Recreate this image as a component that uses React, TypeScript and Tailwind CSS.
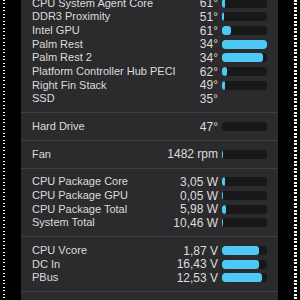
type Row = { label: string; value: string; fill: number | null };

const groups: Row[][] = [
  [
    { label: "CPU System Agent Core", value: "61°", fill: 3 },
    { label: "DDR3 Proximity", value: "51°", fill: 2 },
    { label: "Intel GPU", value: "61°", fill: 9 },
    { label: "Palm Rest", value: "34°", fill: 45 },
    { label: "Palm Rest 2", value: "34°", fill: 41 },
    { label: "Platform Controller Hub PECI", value: "62°", fill: 5 },
    { label: "Right Fin Stack", value: "49°", fill: 3 },
    { label: "SSD", value: "35°", fill: null },
  ],
  [{ label: "Hard Drive", value: "47°", fill: 0 }],
  [{ label: "Fan", value: "1482 rpm", fill: 1 }],
  [
    { label: "CPU Package Core", value: "3,05 W", fill: 3 },
    { label: "CPU Package GPU", value: "0,05 W", fill: 1 },
    { label: "CPU Package Total", value: "5,98 W", fill: 4 },
    { label: "System Total", value: "10,46 W", fill: 1 },
  ],
  [
    { label: "CPU Vcore", value: "1,87 V", fill: 37 },
    { label: "DC In", value: "16,43 V", fill: 37 },
    { label: "PBus", value: "12,53 V", fill: 40 },
  ],
  [{ label: "", value: "", fill: 3 }],
];

const Bar = ({ fill }: { fill: number | null }) => {
  if (fill === null) return <div className="w-[45px] h-[9px] ml-[4px]" />;
  return (
    <div className="w-[45px] h-[9px] ml-[4px] rounded-[3px] bg-[#18181a] overflow-hidden flex">
      {fill > 0 && (
        <div className="h-full rounded-[3px] bg-[#4ec8f7]" style={{ width: fill }} />
      )}
    </div>
  );
};

const Edge = ({ dense }: { dense?: boolean }) => (
  <div
    className={
      dense
        ? "w-[3px] h-full bg-[repeating-linear-gradient(180deg,#ffffff_0px,#ffffff_2px,#000000_2px,#000000_3px,#ffffff_3px,#ffffff_5px,#000000_5px,#000000_7px)]"
        : "w-[2px] h-full bg-[repeating-linear-gradient(180deg,#ffffff_0px,#ffffff_1px,#000000_1px,#000000_3px,#ffffff_3px,#ffffff_4px,#000000_4px,#000000_7px)]"
    }
  />
);

const App = () => {
  return (
    <div
      className="w-[300px] h-[300px] bg-black overflow-hidden flex"
      style={{ fontFamily: '"Liberation Sans", Arial, sans-serif' }}
    >
      <div className="w-[21px] h-full flex pl-[3px]">
        <Edge />
      </div>
      <div className="w-[257px] h-full bg-[#2b2b2d] text-[#dcdcdc] overflow-hidden">
        <div className="-mt-[3.5px]">
          {groups.map((g, gi) => (
            <div
              key={gi}
              className={
                gi === 0
                  ? "pb-[6.5px] border-b border-[#3e3e40]"
                  : "py-[6.5px] border-b border-[#3e3e40]"
              }
            >
              {g.map((r, ri) => (
                <div key={ri} className="h-[13.67px] flex items-center px-[11px]">
                  <div className="flex-1 text-[11px] leading-none whitespace-nowrap">
                    {r.label}
                  </div>
                  <div className="text-[12px] leading-none whitespace-nowrap text-right">
                    {r.value}
                  </div>
                  <Bar fill={r.fill} />
                </div>
              ))}
            </div>
          ))}
        </div>
      </div>
      <div className="flex-1 h-full flex justify-end pr-[3px]">
        <Edge dense />
      </div>
    </div>
  );
};

export default App;
